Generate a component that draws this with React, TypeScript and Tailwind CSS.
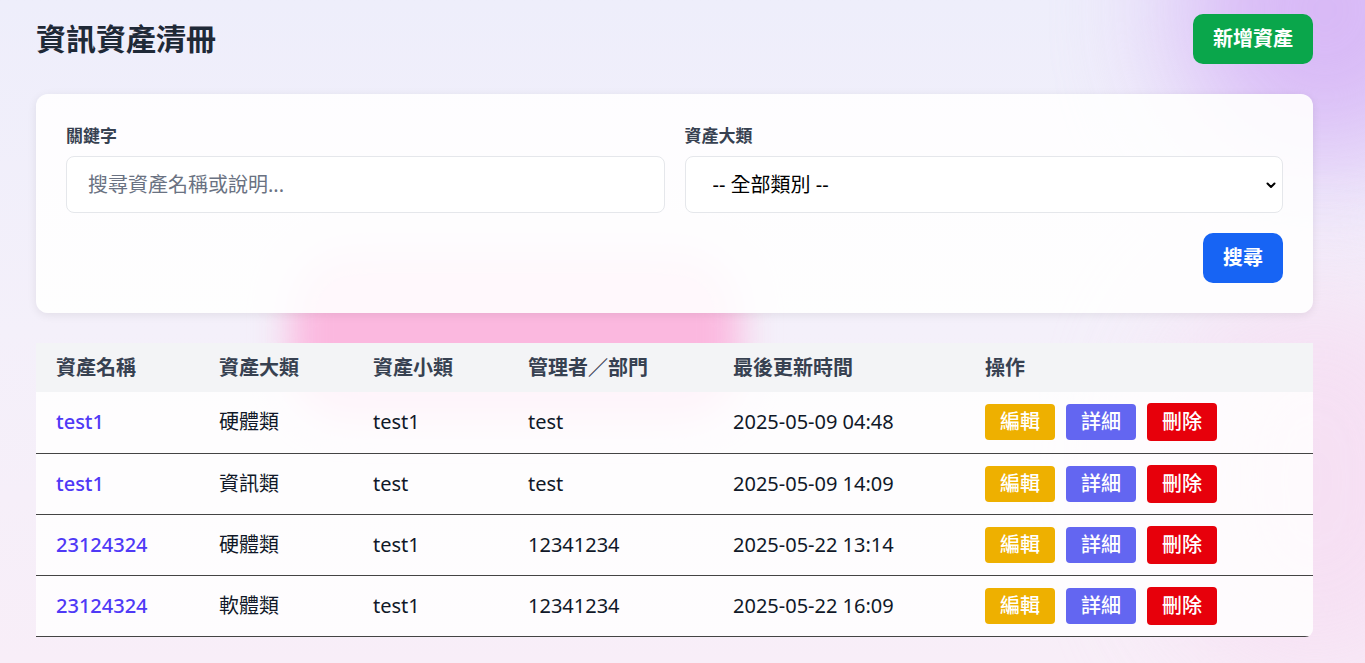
import { useState } from 'react'

type Asset = {
  name: string
  major: string
  minor: string
  owner: string
  updated: string
}

const assets: Asset[] = [
  { name: 'test1', major: '硬體類', minor: 'test1', owner: 'test', updated: '2025-05-09 04:48' },
  { name: 'test1', major: '資訊類', minor: 'test', owner: 'test', updated: '2025-05-09 14:09' },
  { name: '23124324', major: '硬體類', minor: 'test1', owner: '12341234', updated: '2025-05-22 13:14' },
  { name: '23124324', major: '軟體類', minor: 'test1', owner: '12341234', updated: '2025-05-22 16:09' },
]

const font = { fontFamily: '"Noto Sans", "Noto Sans CJK TC", sans-serif' }

export default function App() {
  const [keyword, setKeyword] = useState('')
  const [category, setCategory] = useState('')

  return (
    <div
      className="relative min-h-[663px] overflow-hidden bg-gradient-to-b from-[#eeeefb] via-[#f4f0fa] to-[#f8eef8] text-gray-900"
      style={font}
    >
      {/* background blobs */}
      <div className="pointer-events-none absolute -right-[110px] -top-[150px] h-[320px] w-[300px] rounded-full bg-[#d6b4f6] opacity-90 blur-[60px]" />
      <div className="pointer-events-none absolute right-[-100px] top-[280px] h-[400px] w-[300px] rounded-full bg-[#f6dcf2] opacity-80 blur-[60px]" />
      <div className="pointer-events-none absolute left-[290px] top-[250px] h-[170px] w-[450px] rounded-[60px] bg-[#fbb8df] blur-[18px]" />

      <div className="relative pl-9 pr-[52px] pt-[14px] pb-[26px]">
        <div className="flex items-center justify-between">
          <h1 className="text-[30px] font-bold leading-[40px] text-[#1f2937]">資訊資產清冊</h1>
          <button className="h-[50px] rounded-[10px] bg-[#0aa64b] px-5 text-[20px] font-bold text-white">
            新增資產
          </button>
        </div>

        <div className="mt-[30px] rounded-xl bg-white/90 p-[30px] shadow-[0_2px_10px_rgba(0,0,0,0.08)]">
          <div className="grid grid-cols-2 gap-5">
            <div>
              <label className="mb-2 block text-[17px] font-bold leading-6 text-[#374151]">關鍵字</label>
              <input
                value={keyword}
                onChange={e => setKeyword(e.target.value)}
                placeholder="搜尋資產名稱或說明..."
                className="h-[57px] w-full rounded-lg border border-gray-200 bg-white px-[21px] text-[20px] placeholder:text-gray-500 focus:outline-none"
              />
            </div>
            <div>
              <label className="mb-2 block text-[17px] font-bold leading-6 text-[#374151]">資產大類</label>
              <div className="relative">
                <select
                  value={category}
                  onChange={e => setCategory(e.target.value)}
                  className="h-[57px] w-full appearance-none rounded-lg border border-gray-200 bg-white px-[27px] text-[20px] text-black focus:outline-none"
                >
                  <option value="">-- 全部類別 --</option>
                  <option value="hw">硬體類</option>
                  <option value="sw">軟體類</option>
                  <option value="info">資訊類</option>
                </select>
                <svg
                  className="pointer-events-none absolute right-[6px] top-1/2 -translate-y-1/2"
                  width="12"
                  height="12"
                  viewBox="0 0 12 12"
                >
                  <path d="M2.5 4.5 6 8l3.5-3.5" fill="none" stroke="#000" strokeWidth="2" strokeLinecap="round" strokeLinejoin="round" />
                </svg>
              </div>
            </div>
          </div>
          <div className="mt-5 flex justify-end">
            <button className="h-[50px] w-20 rounded-[10px] bg-[#1764f4] text-[20px] font-bold text-white">搜尋</button>
          </div>
        </div>

        <div className="mt-[30px] overflow-hidden rounded-br-lg">
          <table className="w-full border-collapse text-left text-[20px]">
            <thead>
              <tr className="h-[49px] bg-[#f3f4f6] text-[#374151]">
                <th className="w-[163px] pl-5 font-bold">資產名稱</th>
                <th className="w-[154px] pl-5 font-bold">資產大類</th>
                <th className="w-[155px] pl-5 font-bold">資產小類</th>
                <th className="w-[205px] pl-5 font-bold">管理者／部門</th>
                <th className="w-[252px] pl-5 font-bold">最後更新時間</th>
                <th className="pl-5 font-bold">操作</th>
              </tr>
            </thead>
            <tbody>
              {assets.map((a, i) => (
                <tr key={i} className="h-[61px] border-b border-[#444] bg-white/85">
                  <td className="pl-5 font-medium text-[#4f39f6]">{a.name}</td>
                  <td className="pl-5">{a.major}</td>
                  <td className="pl-5">{a.minor}</td>
                  <td className="pl-5">{a.owner}</td>
                  <td className="pl-5">{a.updated}</td>
                  <td className="pl-5">
                    <div className="flex items-center gap-[11px]">
                      <button className="h-9 w-[70px] rounded-[4px] bg-[#eeb000] text-[20px] font-medium text-white">編輯</button>
                      <button className="h-9 w-[70px] rounded-[4px] bg-[#6366f1] text-[20px] font-medium text-white">詳細</button>
                      <button className="h-[38px] w-[70px] rounded-[4px] bg-[#e7000b] text-[20px] font-medium text-white">刪除</button>
                    </div>
                  </td>
                </tr>
              ))}
            </tbody>
          </table>
        </div>
      </div>
    </div>
  )
}
